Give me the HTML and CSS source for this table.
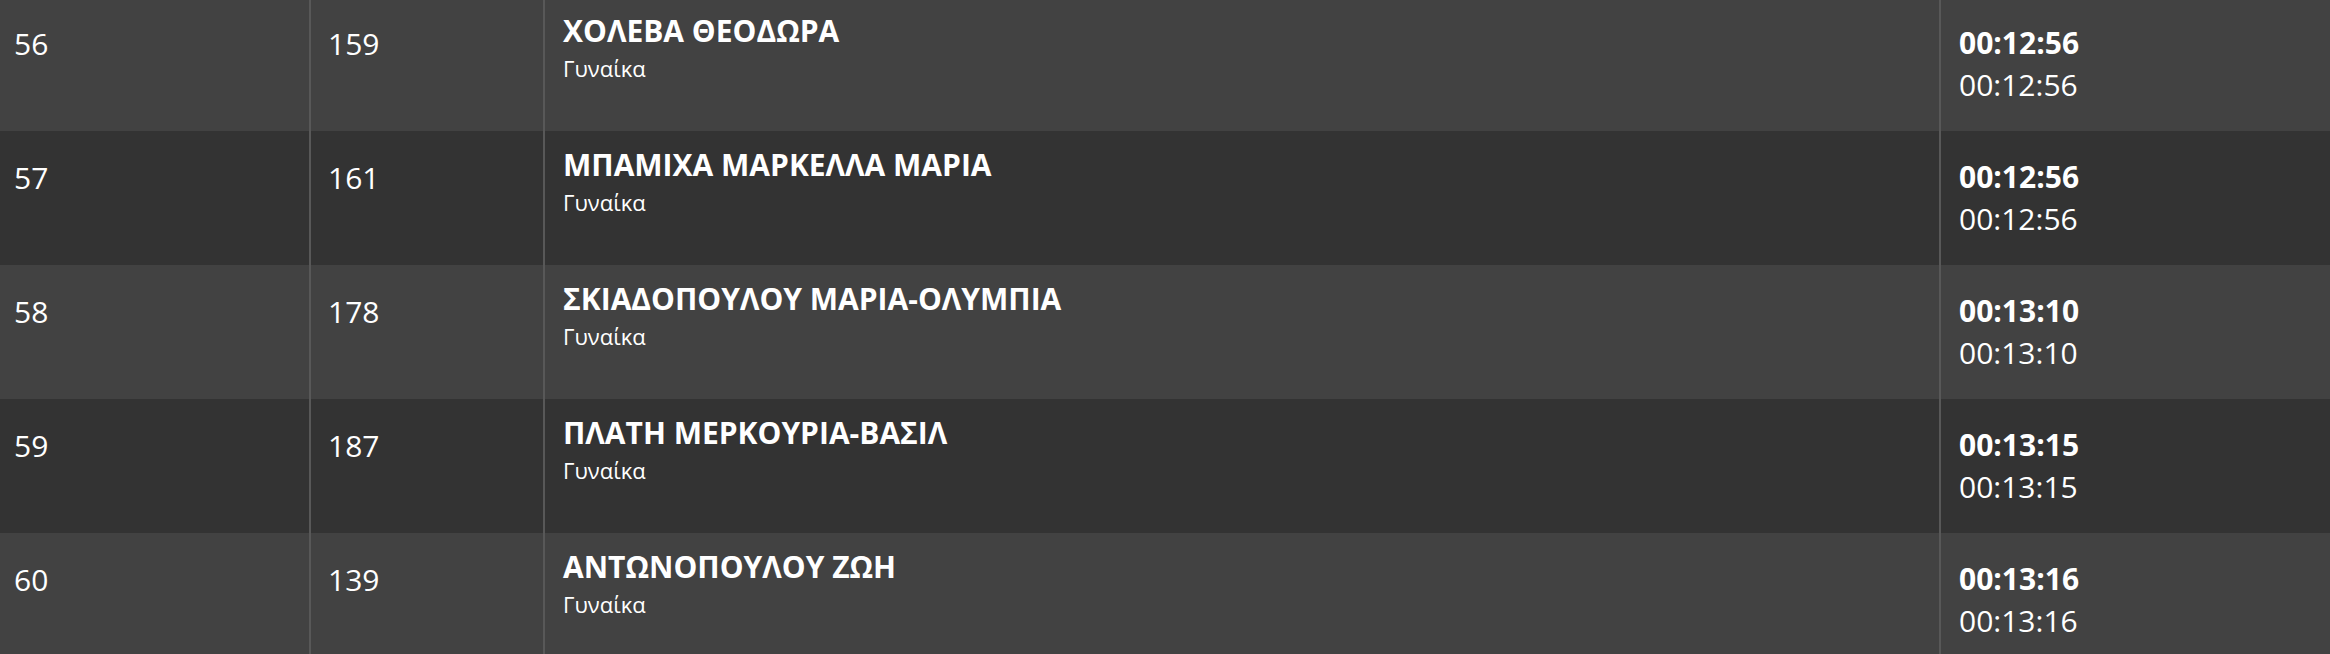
FILE: index.html
```html
<!DOCTYPE html>
<html lang="el">
<head>
<meta charset="utf-8">
<title>Αποτελέσματα</title>
<link rel="stylesheet" href="styles.css">
</head>
<body>
<div class="results">
  <div class="row row-light">
    <div class="cell cell-rank">56</div>
    <div class="cell cell-bib">159</div>
    <div class="cell cell-name"><div class="name">ΧΟΛΕΒΑ ΘΕΟΔΩΡΑ</div><div class="cat">Γυναίκα</div></div>
    <div class="cell cell-time"><div class="time-main">00:12:56</div><div class="time-sub">00:12:56</div></div>
  </div>
  <div class="row row-dark">
    <div class="cell cell-rank">57</div>
    <div class="cell cell-bib">161</div>
    <div class="cell cell-name"><div class="name">ΜΠΑΜΙΧΑ ΜΑΡΚΕΛΛΑ ΜΑΡΙΑ</div><div class="cat">Γυναίκα</div></div>
    <div class="cell cell-time"><div class="time-main">00:12:56</div><div class="time-sub">00:12:56</div></div>
  </div>
  <div class="row row-light">
    <div class="cell cell-rank">58</div>
    <div class="cell cell-bib">178</div>
    <div class="cell cell-name"><div class="name">ΣΚΙΑΔΟΠΟΥΛΟΥ ΜΑΡΙΑ-ΟΛΥΜΠΙΑ</div><div class="cat">Γυναίκα</div></div>
    <div class="cell cell-time"><div class="time-main">00:13:10</div><div class="time-sub">00:13:10</div></div>
  </div>
  <div class="row row-dark">
    <div class="cell cell-rank">59</div>
    <div class="cell cell-bib">187</div>
    <div class="cell cell-name"><div class="name">ΠΛΑΤΗ ΜΕΡΚΟΥΡΙΑ-ΒΑΣΙΛ</div><div class="cat">Γυναίκα</div></div>
    <div class="cell cell-time"><div class="time-main">00:13:15</div><div class="time-sub">00:13:15</div></div>
  </div>
  <div class="row row-light">
    <div class="cell cell-rank">60</div>
    <div class="cell cell-bib">139</div>
    <div class="cell cell-name"><div class="name">ΑΝΤΩΝΟΠΟΥΛΟΥ ΖΩΗ</div><div class="cat">Γυναίκα</div></div>
    <div class="cell cell-time"><div class="time-main">00:13:16</div><div class="time-sub">00:13:16</div></div>
  </div>
</div>
</body>
</html>
```

FILE: styles.css
```css
html, body {
  margin: 0;
  padding: 0;
  background: #424242;
}
body {
  font-family: "Open Sans", "Noto Sans", sans-serif;
  color: #ffffff;
  overflow: hidden;
}
.results {
  margin-top: -3px;
  display: flex;
  flex-direction: column;
}
.row {
  display: grid;
  grid-template-columns: 309px 234px 1396px 1fr;
  height: 134px;
}
.row-light { background: #424242; }
.row-dark { background: #333333; }
.cell {
  box-sizing: border-box;
  padding: 26px 17px 0 17px;
  font-size: 30px;
  line-height: 42px;
}
.cell + .cell {
  border-left: 2px solid #585858;
}
.cell-rank {
  padding-left: 14px;
}
.cell-name {
  padding-top: 13px;
  padding-left: 18px;
}
.name {
  font-weight: 700;
  font-size: 30px;
  line-height: 42px;
}
.cat {
  font-size: 22px;
  line-height: 32px;
}
.cell-time {
  padding-top: 25px;
  padding-left: 18px;
}
.time-main {
  font-weight: 700;
}
.time-sub {
  font-weight: 400;
}
```
